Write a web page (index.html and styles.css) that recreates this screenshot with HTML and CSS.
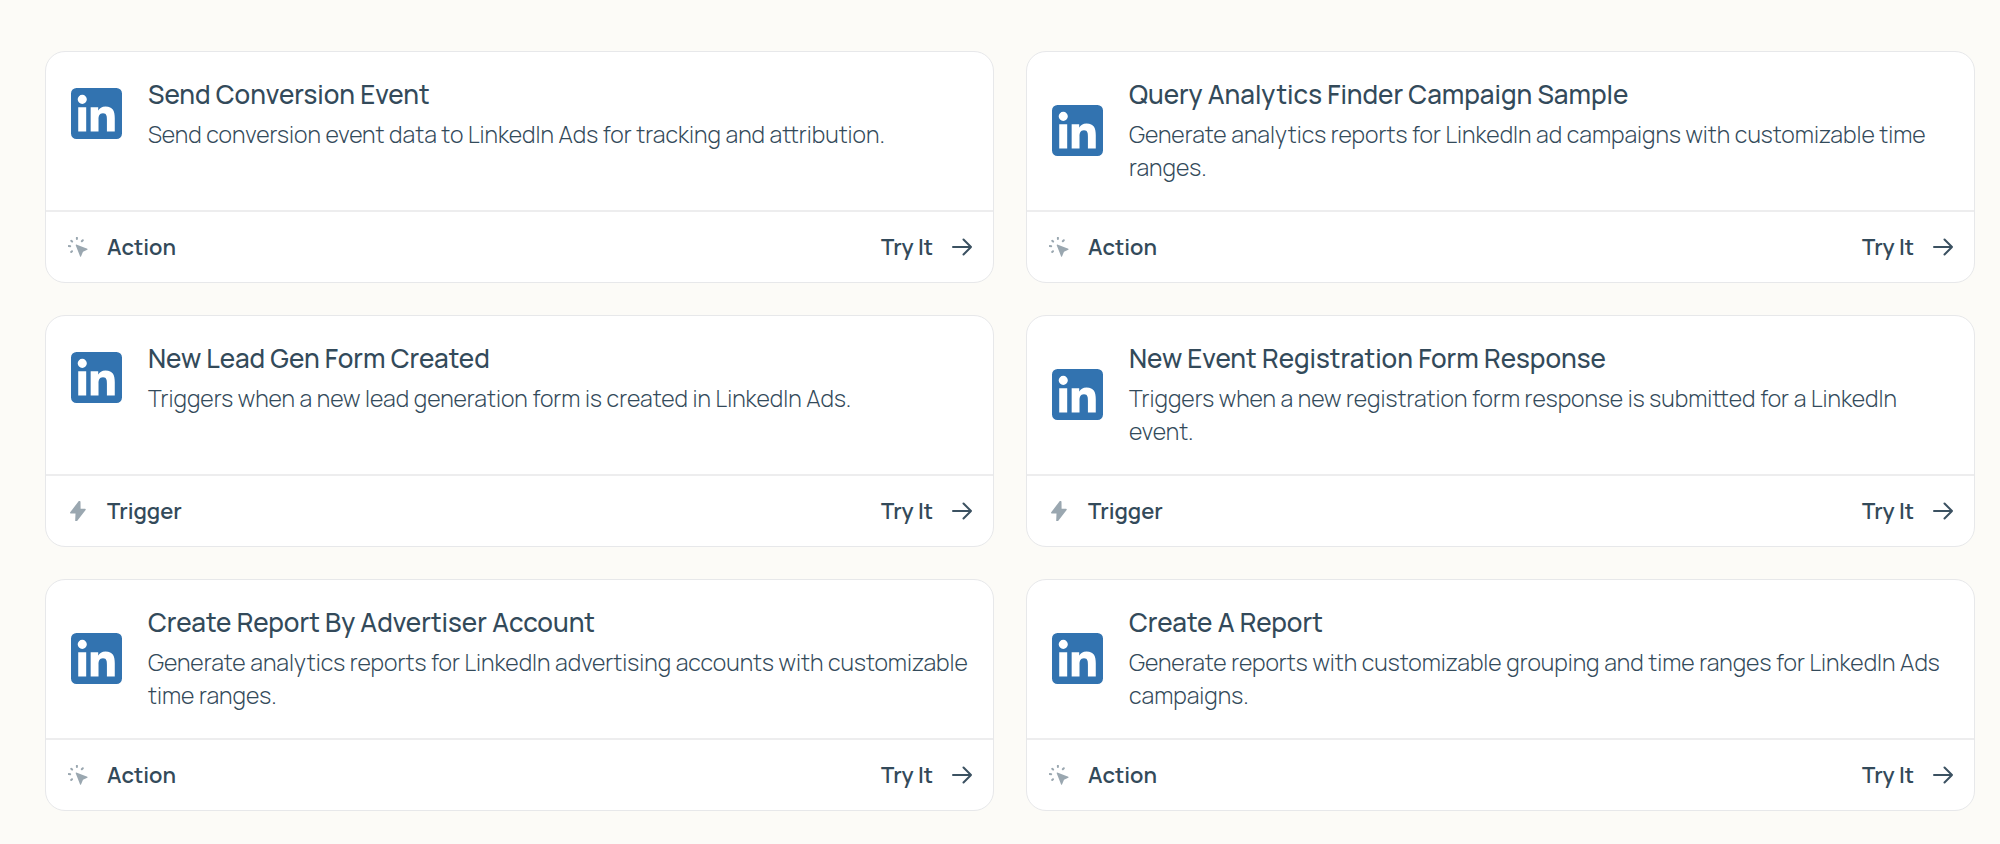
FILE: index.html
```html
<!DOCTYPE html>
<html lang="en">
<head>
<meta charset="utf-8">
<meta name="viewport" content="width=device-width, initial-scale=1">
<title>LinkedIn Ads actions and triggers</title>
<link rel="stylesheet" href="styles.css">
</head>
<body>
<svg class="sprite" aria-hidden="true">
  <symbol id="linkedin" viewBox="0 0 24 24"><path d="M20.600 20.500h-3.700v-5.600c0-1.400 0-3.050-1.850-3.050s-2.100 1.450-2.100 2.950v5.700H9.250V9h3.550v1.550h.05c.5-.95 1.700-1.850 3.400-1.850 3.600 0 4.350 2.400 4.350 5.500v6.300zM5.300 7.500a2.150 2.150 0 1 1 0-4.300 2.150 2.150 0 0 1 0 4.300zm1.850 13H3.400V9h3.750v11.500zM21.400 0H2.600A2.600 2.600 0 0 0 0 2.600v18.800A2.600 2.600 0 0 0 2.600 24h18.800A2.600 2.600 0 0 0 24 21.400V2.600A2.600 2.600 0 0 0 21.400 0z"/></symbol>
  <symbol id="action" viewBox="0 0 20 20"><path d="M8.300 7.600 19.300 11.800a.5.5 0 0 1 0 .9L15 14.800l-2 4.600a.5.5 0 0 1-.9 0L7.700 8.200a.5.5 0 0 1 .6-.6z"/><path class="rays" d="M8.900.8v1.200M3.200 3.800l.9.8M14.800 3.300l-1 1M.8 9l1.400.2M4 14.200l-.8.8"/></symbol>
  <symbol id="trigger" viewBox="0 0 20 20"><path d="M10.600.3 2.200 11.300c-.4.500-.1 1.200.5 1.200h4.800L7.200 19.800c0 1 1 1.300 1.600.6l8.800-11.400c.4-.6.1-1.300-.6-1.300h-4.400L12.500.9c0-1-1.300-1.300-1.900-.6z"/></symbol>
  <symbol id="arrow" viewBox="0 0 20 20"><path d="M1 10h18M11.500 2.500 19 10l-7.500 7.500"/></symbol>
</svg>
<main class="grid">
  <article class="card">
    <div class="summary">
      <svg class="logo" role="img" aria-label="LinkedIn"><use href="#linkedin"/></svg>
      <div class="copy"><h2 class="title">Send Conversion Event</h2><p class="description">Send conversion event data to LinkedIn Ads for tracking and attribution.</p></div>
    </div>
    <div class="footer"><span class="kind"><svg class="icon" aria-hidden="true"><use href="#action"/></svg>Action</span><a class="try" href="#">Try It<svg class="arrow" aria-hidden="true"><use href="#arrow"/></svg></a></div>
  </article>
  <article class="card">
    <div class="summary">
      <svg class="logo" role="img" aria-label="LinkedIn"><use href="#linkedin"/></svg>
      <div class="copy"><h2 class="title">Query Analytics Finder Campaign Sample</h2><p class="description">Generate analytics reports for LinkedIn ad campaigns with customizable time ranges.</p></div>
    </div>
    <div class="footer"><span class="kind"><svg class="icon" aria-hidden="true"><use href="#action"/></svg>Action</span><a class="try" href="#">Try It<svg class="arrow" aria-hidden="true"><use href="#arrow"/></svg></a></div>
  </article>
  <article class="card">
    <div class="summary">
      <svg class="logo" role="img" aria-label="LinkedIn"><use href="#linkedin"/></svg>
      <div class="copy"><h2 class="title">New Lead Gen Form Created</h2><p class="description">Triggers when a new lead generation form is created in LinkedIn Ads.</p></div>
    </div>
    <div class="footer"><span class="kind"><svg class="icon" aria-hidden="true"><use href="#trigger"/></svg>Trigger</span><a class="try" href="#">Try It<svg class="arrow" aria-hidden="true"><use href="#arrow"/></svg></a></div>
  </article>
  <article class="card">
    <div class="summary">
      <svg class="logo" role="img" aria-label="LinkedIn"><use href="#linkedin"/></svg>
      <div class="copy"><h2 class="title">New Event Registration Form Response</h2><p class="description">Triggers when a new registration form response is submitted for a LinkedIn event.</p></div>
    </div>
    <div class="footer"><span class="kind"><svg class="icon" aria-hidden="true"><use href="#trigger"/></svg>Trigger</span><a class="try" href="#">Try It<svg class="arrow" aria-hidden="true"><use href="#arrow"/></svg></a></div>
  </article>
  <article class="card">
    <div class="summary">
      <svg class="logo" role="img" aria-label="LinkedIn"><use href="#linkedin"/></svg>
      <div class="copy"><h2 class="title">Create Report By Advertiser Account</h2><p class="description">Generate analytics reports for LinkedIn advertising accounts with customizable time ranges.</p></div>
    </div>
    <div class="footer"><span class="kind"><svg class="icon" aria-hidden="true"><use href="#action"/></svg>Action</span><a class="try" href="#">Try It<svg class="arrow" aria-hidden="true"><use href="#arrow"/></svg></a></div>
  </article>
  <article class="card">
    <div class="summary">
      <svg class="logo" role="img" aria-label="LinkedIn"><use href="#linkedin"/></svg>
      <div class="copy"><h2 class="title">Create A Report</h2><p class="description">Generate reports with customizable grouping and time ranges for LinkedIn Ads campaigns.</p></div>
    </div>
    <div class="footer"><span class="kind"><svg class="icon" aria-hidden="true"><use href="#action"/></svg>Action</span><a class="try" href="#">Try It<svg class="arrow" aria-hidden="true"><use href="#arrow"/></svg></a></div>
  </article>
</main>
</body>
</html>
```
FILE: styles.css
```css
* { box-sizing: border-box; }

body {
  margin: 0;
  background: #fcfbf7;
  color: #334a5a;
  font-family: Manrope, Inter, sans-serif;
}

.sprite { display: none; }

.grid {
  display: grid;
  grid-template-columns: repeat(2, minmax(0, 1fr));
  grid-auto-rows: 1fr;
  gap: 32px;
  padding: 51px 25px 32px 45px;
}

.card {
  display: flex;
  flex-direction: column;
  background: #fff;
  border: 1px solid #e7e8ea;
  border-radius: 20px;
}

.summary {
  display: grid;
  grid-template-columns: 51px minmax(0, 1fr);
  flex: 1;
  align-content: start;
  align-items: center;
  column-gap: 26px;
  padding: 24px 24px 26px 25px;
}

.logo { width: 51px; height: 51px; fill: #3273b0; }

.title { margin: 0 0 6px; font-size: 26px; font-weight: 500; line-height: 36px; }

.description { margin: 0; font-size: 23px; font-weight: 300; line-height: 33px; }

.footer {
  display: flex;
  align-items: center;
  justify-content: space-between;
  height: 72px;
  padding: 0 21px 0 22px;
  border-top: 2px solid #ededee;
  font-size: 22px;
  font-weight: 600;
}

.kind, .try { display: flex; align-items: center; gap: 19px; }

.try { color: inherit; text-decoration: none; }

.icon { width: 20px; height: 20px; fill: #9aa7b0; overflow: visible; }

.rays { fill: none; stroke: #9aa7b0; stroke-width: 2; stroke-linecap: round; }

.arrow { width: 20px; height: 20px; fill: none; stroke: #3b5161; stroke-width: 2; stroke-linecap: round; stroke-linejoin: round; }
```
